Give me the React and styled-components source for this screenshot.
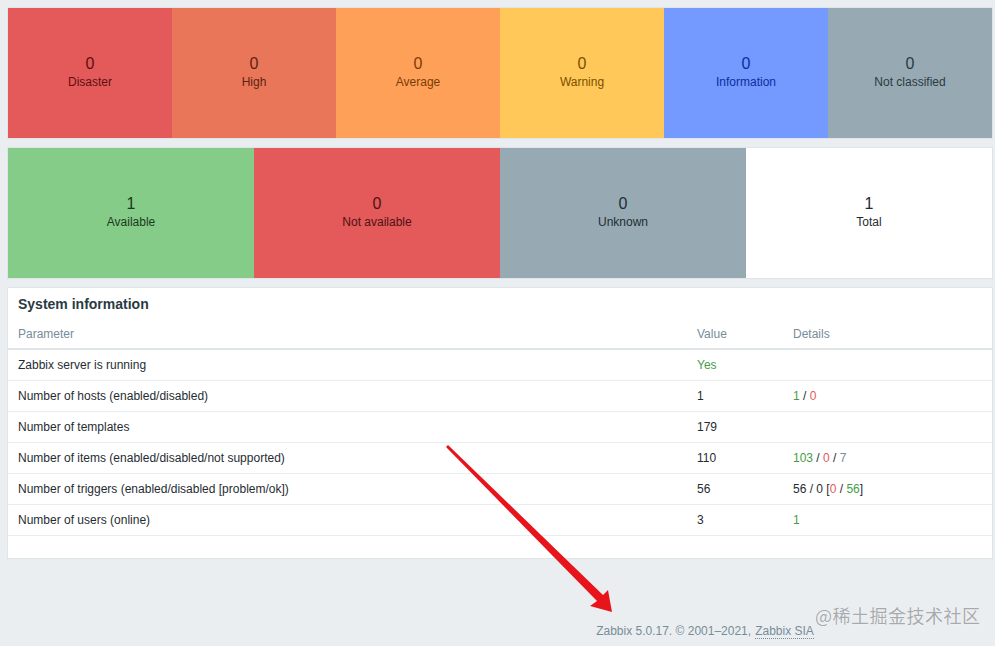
import React from 'react'
import styled, { createGlobalStyle } from 'styled-components'

const GlobalStyle = createGlobalStyle`
  html, body {
    margin: 0;
    padding: 0;
    background: #ebeef0;
    font-family: "Liberation Sans", Arial, sans-serif;
    color: #1f2c33;
  }
`

const Page = styled.div`
  position: relative;
  width: 995px;
  height: 646px;
  padding: 8px 3px 0 8px;
  box-sizing: border-box;
  display: flex;
  flex-direction: column;
  gap: 10px;
  overflow: hidden;
`

const Widget = styled.div`
  display: grid;
  grid-template-columns: repeat(${(p) => p.cols}, 1fr);
  height: 130px;
  width: 984px;
  background: #fff;
  box-shadow: 0 0 0 1px #dfe4e7;
`

const Cell = styled.div`
  display: flex;
  flex-direction: column;
  align-items: center;
  justify-content: center;
  background: ${(p) => p.bg};
  color: ${(p) => p.fg};
`

const Count = styled.div`
  font-size: 16px;
  line-height: 18px;
`

const Label = styled.div`
  font-size: 12px;
  line-height: 18px;
`

const Panel = styled.div`
  width: 984px;
  height: 270px;
  background: #fff;
  box-shadow: 0 0 0 1px #dfe4e7;
  box-sizing: border-box;
`

const PanelTitle = styled.h4`
  margin: 0;
  height: 32px;
  padding: 0 10px;
  display: flex;
  align-items: center;
  font-size: 14px;
  font-weight: bold;
  color: #2b3a42;
`

const Table = styled.table`
  width: 100%;
  border-collapse: collapse;
  font-size: 12px;
`

const Th = styled.th`
  text-align: left;
  font-weight: normal;
  color: #768d99;
  height: 28px;
  padding: 0 10px;
  border-bottom: 2px solid #dfe4e7;
  width: ${(p) => p.w || 'auto'};
`

const Td = styled.td`
  height: 30px;
  padding: 0 10px;
  border-bottom: 1px solid #ebeef0;
`

const Green = styled.span`
  color: #429e47;
`

const Red = styled.span`
  color: #e45959;
`

const Grey = styled.span`
  color: #768d99;
`

const Footer = styled.div`
  margin-top: auto;
  height: 30px;
  display: flex;
  justify-content: center;
  align-items: center;
  padding-left: 410px;
  font-size: 12px;
  color: #768d99;
`

const FooterLink = styled.span`
  margin-left: 4px;
  border-bottom: 1px dotted #768d99;
  line-height: 14px;
`

const Watermark = styled.div`
  position: absolute;
  left: 815px;
  top: 602px;
  font-size: 18px;
  color: rgba(150, 155, 160, 0.85);
  font-family: "Noto Sans CJK SC", "Liberation Sans", sans-serif;
  letter-spacing: 0.5px;
  text-shadow: 0 0 1px #fff;
`

const Arrow = styled.svg`
  position: absolute;
  left: 0;
  top: 0;
  pointer-events: none;
`

const problems = [
  { label: 'Disaster', bg: '#e45959', fg: '#5e1010' },
  { label: 'High', bg: '#e97659', fg: '#5c2410' },
  { label: 'Average', bg: '#ffa059', fg: '#7a3c05' },
  { label: 'Warning', bg: '#ffc859', fg: '#7a5000' },
  { label: 'Information', bg: '#7499ff', fg: '#0c2ea0' },
  { label: 'Not classified', bg: '#97aab3', fg: '#2b3a42' },
]

const hosts = [
  { count: 1, label: 'Available', bg: '#86cc89', fg: '#1b3a1d' },
  { count: 0, label: 'Not available', bg: '#e45959', fg: '#4a1414' },
  { count: 0, label: 'Unknown', bg: '#97aab3', fg: '#1f2c33' },
  { count: 1, label: 'Total', bg: '#ffffff', fg: '#1f2c33' },
]

const rows = [
  ['Zabbix server is running', <Green>Yes</Green>, ''],
  ['Number of hosts (enabled/disabled)', '1', <><Green>1</Green> / <Red>0</Red></>],
  ['Number of templates', '179', ''],
  ['Number of items (enabled/disabled/not supported)', '110', <><Green>103</Green> / <Red>0</Red> / <Grey>7</Grey></>],
  ['Number of triggers (enabled/disabled [problem/ok])', '56', <>56 / 0 [<Red>0</Red> / <Green>56</Green>]</>],
  ['Number of users (online)', '3', <Green>1</Green>],
]

const App = () => {
  return (
    <Page>
      <GlobalStyle />
      <Widget cols={6}>
        {problems.map((p) => (
          <Cell key={p.label} bg={p.bg} fg={p.fg}>
            <Count>0</Count>
            <Label>{p.label}</Label>
          </Cell>
        ))}
      </Widget>
      <Widget cols={4}>
        {hosts.map((h) => (
          <Cell key={h.label} bg={h.bg} fg={h.fg}>
            <Count>{h.count}</Count>
            <Label>{h.label}</Label>
          </Cell>
        ))}
      </Widget>
      <Panel>
        <PanelTitle>System information</PanelTitle>
        <Table>
          <thead>
            <tr>
              <Th>Parameter</Th>
              <Th w="76px">Value</Th>
              <Th w="189px">Details</Th>
            </tr>
          </thead>
          <tbody>
            {rows.map((r) => (
              <tr key={r[0]}>
                <Td>{r[0]}</Td>
                <Td>{r[1]}</Td>
                <Td>{r[2]}</Td>
              </tr>
            ))}
          </tbody>
        </Table>
      </Panel>
      <Footer>
        Zabbix 5.0.17. © 2001–2021, <FooterLink>Zabbix SIA</FooterLink>
      </Footer>
      <Watermark>@稀土掘金技术社区</Watermark>
      <Arrow width="995" height="646" viewBox="0 0 995 646">
        <polygon
          points="447,446 448,445 603,595 608,590 612,612 590,606 597,601 446,447"
          fill="#e8141c"
        />
      </Arrow>
    </Page>
  )
}

export default App
